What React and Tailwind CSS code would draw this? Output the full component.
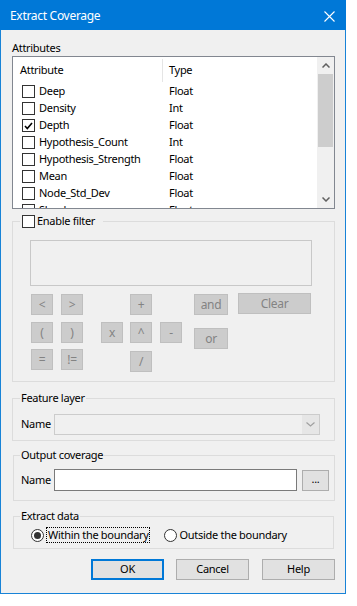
import React from 'react';

const font = "font-['Segoe_UI','Noto_Sans',sans-serif] text-[11px] tracking-[-0.3px]";

const attributes = [
    { name: 'Deep', type: 'Float' },
    { name: 'Density', type: 'Int' },
    { name: 'Depth', type: 'Float', checked: true },
    { name: 'Hypothesis_Count', type: 'Int' },
    { name: 'Hypothesis_Strength', type: 'Float' },
    { name: 'Mean', type: 'Float' },
    { name: 'Node_Std_Dev', type: 'Float' },
    { name: 'Shoal', type: 'Float' },
];

const Check = ({ checked }) => (
    <span className="w-[13px] h-[13px] shrink-0 border border-[#333333] bg-white flex items-center justify-center">
        {checked && (
            <svg width="9" height="8" viewBox="0 0 9 8">
                <path d="M1 4 L3.3 6.5 L8 1" fill="none" stroke="#000" strokeWidth="1.6" />
            </svg>
        )}
    </span>
);

const Chevron = ({ up }) => (
    <svg width="8" height="5" viewBox="0 0 8 5">
        <path d={up ? 'M0.5 4.5 L4 1 L7.5 4.5' : 'M0.5 0.5 L4 4 L7.5 0.5'} fill="none" stroke="#606060" strokeWidth="1.5" />
    </svg>
);

const Key = ({ label, w = 'w-[22px]', extra = '' }) => (
    <div className={`${w} h-[21px] shrink-0 bg-[#cccccc] border border-[#bfbfbf] text-[#838383] text-[12px] flex items-center justify-center leading-none ${extra}`}>
        {label}
    </div>
);

const Radio = ({ checked }) => (
    <span className="w-[13px] h-[13px] shrink-0 rounded-full border border-[#333333] bg-white flex items-center justify-center">
        {checked && <span className="w-[7px] h-[7px] rounded-full bg-[#333333]" />}
    </span>
);

const Button = ({ label, primary }) => (
    <div className={`w-[73px] h-[21px] bg-[#e1e1e1] flex items-center justify-center ${primary ? 'border-2 border-[#0078d7]' : 'border border-[#adadad]'}`}>
        {label}
    </div>
);

export default function App() {
    return (
        <div className={`${font} whitespace-nowrap text-black bg-white min-h-[606px]`}>
            <div className="w-[346px] h-[594px] border border-[#1883d7] bg-[#f0f0f0] flex flex-col">
                {/* Title bar */}
                <div className="h-[30px] bg-[#0078d7] -mx-px -mt-px pl-[10px] pr-[10px] pt-[2px] flex items-center justify-between text-white">
                    <span className="text-[12px]">Extract Coverage</span>
                    <svg width="11" height="11" viewBox="0 0 11 11" className="mr-[1px]">
                        <path d="M0.5 0.5 L10.5 10.5 M10.5 0.5 L0.5 10.5" stroke="#fff" strokeWidth="1.1" />
                    </svg>
                </div>

                <div className="pl-[11px] pt-[9px]">
                    <div className="leading-[16px] pt-[1px]">Attributes</div>

                    {/* Attribute list */}
                    <div className="w-[323px] h-[153px] border border-[#828790] bg-white flex">
                        <div className="flex-1 flex flex-col overflow-hidden">
                            <div className="h-[25px] shrink-0 flex items-center pt-[1px]">
                                <div className="w-[150px] h-[23px] pl-[7px] flex items-center border-r border-[#e5e5e5]">Attribute</div>
                                <div className="pl-[6px]">Type</div>
                            </div>
                            {attributes.map((a) => (
                                <div key={a.name} className="h-[17px] shrink-0 flex items-center pt-[2px]">
                                    <div className="w-[156px] pl-[9px] flex items-center gap-[4px]">
                                        <Check checked={a.checked} />
                                        <span>{a.name}</span>
                                    </div>
                                    <span>{a.type}</span>
                                </div>
                            ))}
                        </div>
                        {/* Scrollbar */}
                        <div className="w-[17px] bg-[#f0f0f0] flex flex-col">
                            <div className="h-[17px] flex items-center justify-center"><Chevron up /></div>
                            <div className="h-[73px] mx-[1px] bg-[#cdcdcd]" />
                            <div className="flex-1" />
                            <div className="h-[17px] flex items-center justify-center"><Chevron /></div>
                        </div>
                    </div>

                    {/* Filter group */}
                    <fieldset className="mt-[4px] w-[323px] h-[169px] border border-[#dcdcdc]">
                        <legend className="ml-[7px] px-[2px] pr-[8px] h-[16px] flex items-center gap-[2px]">
                            <Check />
                            <span>Enable filter</span>
                        </legend>
                        <div className="mt-[11px] ml-[17px] w-[282px] h-[46px] border border-[#c8c8c8] bg-[#f0f0f0]" />

                        <div className="mt-[8px] pl-[18px] flex items-start">
                            <Key label="<" />
                            <Key label=">" extra="ml-[8px]" />
                            <Key label="+" extra="ml-[47px]" />
                            <Key label="and" w="w-[34px]" extra="ml-[42px]" />
                            <Key label="Clear" w="w-[73px]" extra="ml-[10px] -mt-[1px]" />
                        </div>
                        <div className="mt-[7px] pl-[18px] flex items-start">
                            <Key label="(" />
                            <Key label=")" extra="ml-[8px]" />
                            <Key label="x" extra="ml-[18px]" />
                            <Key label="^" extra="ml-[7px]" />
                            <Key label="-" extra="ml-[8px]" />
                            <Key label="or" w="w-[34px]" extra="ml-[12px] mt-[6px]" />
                        </div>
                        <div className="pl-[18px] flex items-start">
                            <Key label="=" />
                            <Key label="!=" extra="ml-[8px]" />
                            <Key label="/" extra="ml-[47px] mt-[2px]" />
                        </div>
                    </fieldset>

                    {/* Feature layer */}
                    <fieldset className="mt-[8px] w-[323px] h-[51px] border border-[#dcdcdc]">
                        <legend className="ml-[7px] px-[1px] leading-[16px]">Feature layer</legend>
                        <div className="mt-[8px] pl-[8px] flex items-center">
                            <span className="w-[33px]">Name</span>
                            <div className="w-[266px] h-[21px] border border-[#cccccc] bg-[#f0f0f0] flex justify-end">
                                <div className="w-[17px] bg-[#e6e6e6] flex items-center justify-center">
                                    <svg width="9" height="5" viewBox="0 0 9 5">
                                        <path d="M0.5 0.5 L4.5 4 L8.5 0.5" fill="none" stroke="#a0a0a0" strokeWidth="1.2" />
                                    </svg>
                                </div>
                            </div>
                        </div>
                    </fieldset>

                    {/* Output coverage */}
                    <fieldset className="mt-[6px] ml-[1px] w-[322px] h-[54px] border border-[#dcdcdc]">
                        <legend className="ml-[6px] px-[1px] leading-[16px]">Output coverage</legend>
                        <div className="mt-[6px] pl-[7px] flex items-start">
                            <span className="w-[33px] h-[22px] flex items-center">Name</span>
                            <div className="w-[243px] h-[22px] border border-[#7a7a7a] bg-white" />
                            <div className="ml-[5px] mt-[1px] w-[27px] h-[21px] border border-[#adadad] bg-[#e1e1e1] flex items-center justify-center leading-none pb-[4px]">...</div>
                        </div>
                    </fieldset>

                    {/* Extract data */}
                    <fieldset className="mt-[7px] ml-[1px] w-[321px] h-[41px] border border-[#dcdcdc]">
                        <legend className="ml-[6px] px-[1px] leading-[16px]">Extract data</legend>
                        <div className="mt-[3px] pl-[17px] flex items-center h-[16px]">
                            <Radio checked />
                            <span className="ml-[2px] h-[16px] pl-[1px] border border-dotted border-black flex items-center">Within the boundary</span>
                            <span className="ml-[14px]"><Radio /></span>
                            <span className="ml-[3px]">Outside the boundary</span>
                        </div>
                    </fieldset>
                </div>

                <div className="mt-[10px] pr-[10px] flex justify-end">
                    <Button label="OK" primary />
                    <div className="ml-[12px]"><Button label="Cancel" /></div>
                    <div className="ml-[13px]"><Button label="Help" /></div>
                </div>
            </div>
        </div>
    );
}
